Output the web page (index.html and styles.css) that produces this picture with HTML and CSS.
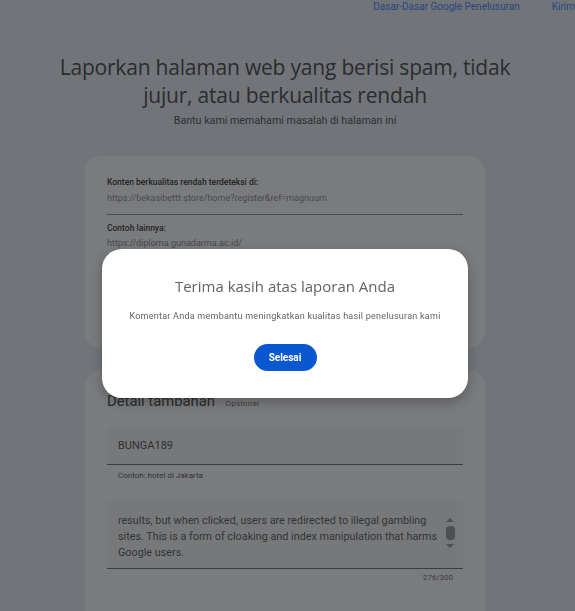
FILE: index.html
```html
<!DOCTYPE html>
<html lang="id">
<head>
    <meta charset="UTF-8">
    <meta name="viewport" content="width=device-width, initial-scale=1.0">
    <title>Laporkan spam</title>
    <link rel="stylesheet" href="styles.css">
</head>
<body>
    <nav class="topnav">
        <a href="#">Dasar-Dasar Google Penelusuran</a>
        <a href="#">Kirim</a>
    </nav>

    <main class="page">
        <h1>Laporkan halaman web yang berisi spam, tidak jujur, atau berkualitas rendah</h1>
        <p class="subtitle">Bantu kami memahami masalah di halaman ini</p>

        <section class="card card-urls">
            <div class="field">
                <label>Konten berkualitas rendah terdeteksi di:</label>
                <div class="value">https://bekasibettt.store/home?register&amp;ref=magnuum</div>
            </div>
            <div class="field plain">
                <label>Contoh lainnya:</label>
                <div class="value">https://diploma.gunadarma.ac.id/</div>
            </div>
        </section>

        <section class="card card-details">
            <h2>Detail tambahan <span class="optional">Opsional</span></h2>
            <div class="input">BUNGA189</div>
            <p class="hint">Contoh: hotel di Jakarta</p>
            <div class="textarea">
                <p>results, but when clicked, users are redirected to illegal gambling sites. This is a form of cloaking and index manipulation that harms Google users.</p>
                <div class="scroll">
                    <span class="arrow up"></span>
                    <span class="thumb"></span>
                    <span class="arrow down"></span>
                </div>
            </div>
            <p class="counter">276/300</p>
        </section>
    </main>

    <div class="overlay">
        <div class="dialog">
            <h3>Terima kasih atas laporan Anda</h3>
            <p>Komentar Anda membantu meningkatkan kualitas hasil penelusuran kami</p>
            <button>Selesai</button>
        </div>
    </div>
</body>
</html>
```

FILE: styles.css
```css
body {
    margin: 0;
    background-color: #717479;
    font-family: Roboto, "Liberation Sans", sans-serif;
    color: #2a2b2e;
    overflow: hidden;
}
.topnav {
    display: flex;
    justify-content: flex-end;
    gap: 32px;
    height: 20px;
    padding-top: 1px;
    white-space: nowrap;
}
.topnav a {
    font-size: 10px;
    color: #2a4682;
    text-decoration: none;
}
.page {
    width: 400px;
    margin-left: 85px;
}
h1 {
    font-family: "Open Sans", Roboto, sans-serif;
    font-weight: 400;
    font-size: 21px;
    line-height: 28px;
    text-align: center;
    color: #2b2c2f;
    margin: 32px -40px 0;
    letter-spacing: -0.2px;
}
.subtitle {
    font-size: 10.7px;
    text-align: center;
    margin: 5px 0 0;
    color: #2e2f32;
}
.card {
    background-color: #7a7b7d;
    border-radius: 16px;
    padding: 20px 22px;
}
.card-urls {
    margin-top: 29px;
    height: 152px;
}
.field {
    border-bottom: 1px solid #48494c;
    padding: 1px 0 11px;
}
.field.plain {
    border-bottom: none;
    padding-top: 8px;
}
.field label {
    display: block;
    font-size: 8.5px;
    font-weight: 500;
    color: #232426;
}
.field .value {
    font-size: 9px;
    color: #484a4d;
    margin-top: 6px;
}
.field.plain .value {
    margin-top: 5px;
}
.card-details {
    margin-top: 22px;
    padding-top: 20px;
    height: 242px;
}
h2 {
    font-weight: 400;
    font-size: 14.8px;
    line-height: 22px;
    margin: 0;
    color: #2a2b2e;
}
.optional {
    font-size: 8px;
    letter-spacing: 0.3px;
    color: #3e3f42;
    margin-left: 7px;
}
.input {
    margin-top: 13px;
    height: 36px;
    line-height: 36px;
    background-color: #77787a;
    border-bottom: 1px solid #3b3c3f;
    padding-left: 11px;
    font-size: 11px;
    color: #2e2f32;
}
.hint {
    font-size: 8px;
    margin: 6px 0 0 11px;
    color: #333437;
}
.textarea {
    margin-top: 21px;
    background-color: #77787a;
    border-bottom: 1px solid #3b3c3f;
    display: flex;
    padding: 12px 8px 5px 11px;
    height: 50px;
}
.textarea p {
    margin: 0;
    flex: 1;
    font-size: 10.8px;
    line-height: 16px;
    color: #333437;
}
.scroll {
    display: flex;
    flex-direction: column;
    align-items: center;
    gap: 4px;
    width: 10px;
    padding-top: 5px;
}
.arrow {
    width: 0;
    height: 0;
    border-left: 4px solid transparent;
    border-right: 4px solid transparent;
}
.arrow.up { border-bottom: 4px solid #4e4f52; }
.arrow.down { border-top: 4px solid #4e4f52; }
.thumb {
    width: 9px;
    height: 14px;
    border-radius: 4px;
    background-color: #4e4f52;
}
.counter {
    margin: 4px 10px 0 0;
    text-align: right;
    font-size: 8px;
    color: #3a3b3e;
}
.overlay {
    position: fixed;
    top: 0;
    left: 0;
    right: 0;
    bottom: 0;
    display: flex;
    justify-content: center;
    align-items: flex-start;
    padding-top: 249px;
    padding-right: 5px;
}
.dialog {
    width: 366px;
    height: 149px;
    box-sizing: border-box;
    background-color: #fff;
    border-radius: 20px;
    box-shadow: 0 4px 12px rgba(0, 0, 0, 0.25);
    text-align: center;
    padding-top: 27px;
}
.dialog h3 {
    font-family: "Open Sans", Roboto, sans-serif;
    font-weight: 400;
    font-size: 15px;
    color: #5f6368;
    margin: 0;
}
.dialog p {
    font-size: 9px;
    letter-spacing: 0.25px;
    color: #5f6368;
    margin: 15px 0 0;
}
.dialog button {
    margin-top: 23px;
    background-color: #0b57d0;
    color: #fff;
    border: none;
    border-radius: 14px;
    width: 63px;
    height: 27px;
    font-family: Roboto, sans-serif;
    font-weight: 700;
    font-size: 10px;
    cursor: pointer;
}
```
